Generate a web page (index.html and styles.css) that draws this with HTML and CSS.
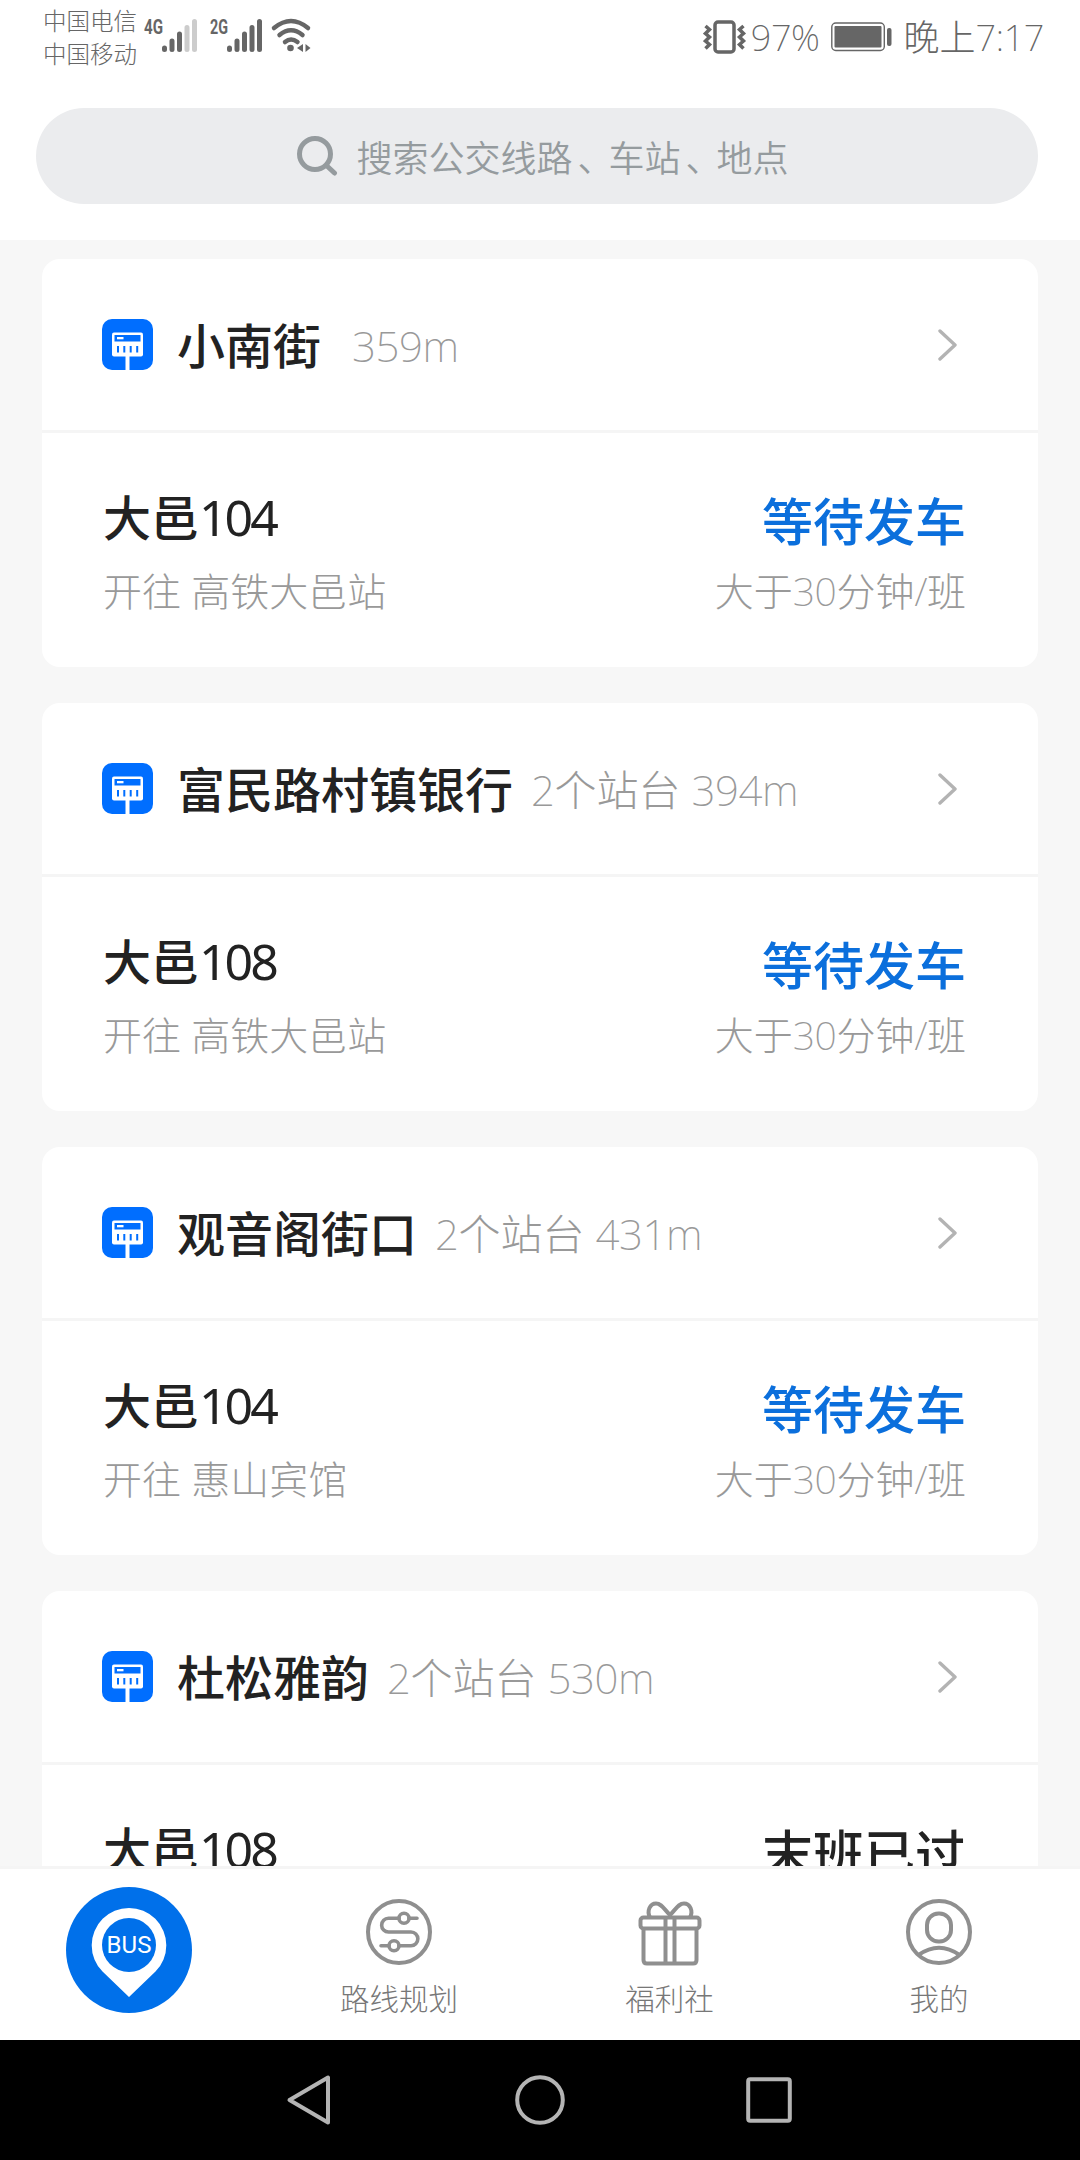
FILE: index.html
```html
<!DOCTYPE html>
<html lang="zh-CN">
<head>
<meta charset="utf-8">
<title>附近站点</title>
<link rel="stylesheet" href="styles.css">
</head>
<body>
<svg class="defs" width="0" height="0" aria-hidden="true">
  <symbol id="stop" viewBox="0 0 51 51">
    <rect width="51" height="51" rx="10" fill="#006eff"/>
    <rect x="10" y="13.500" width="31" height="24" rx="2" fill="#fff"/>
    <rect x="12.500" y="16" width="26" height="6.500" fill="#006eff"/>
    <rect x="15" y="18" width="6.500" height="2.300" fill="#fff"/>
    <path d="M16 27v6.500M22.300 27v6.500M28.700 27v6.500M35.200 27v6.500" stroke="#006eff" stroke-width="2"/>
    <rect x="23.500" y="37" width="4" height="14" fill="#fff"/>
  </symbol>
  <symbol id="arrow" viewBox="0 0 20 32">
    <path d="M2 2l15 14L2 30" fill="none" stroke="#b3b3b3" stroke-width="3.400" stroke-linecap="round" stroke-linejoin="round"/>
  </symbol>
</svg>
<div class="app">
  <header class="status">
    <div class="carriers"><span>中国电信</span><span>中国移动</span></div>
    <svg class="signals" width="170" height="50" viewBox="0 0 170 50">
      <g font-family="Roboto, sans-serif" font-weight="700" font-size="20" fill="#666">
        <text x="1" y="23" textLength="19" lengthAdjust="spacingAndGlyphs">4G</text>
        <text x="67" y="23" textLength="18" lengthAdjust="spacingAndGlyphs">2G</text>
      </g>
      <g stroke="#666" stroke-width="5" stroke-linecap="round">
        <path d="M21.500 37v1.500M29 30v8.500M36.500 23v15.500"/>
        <path d="M44 16.500v22M51.500 10.500v28" stroke="#ccc"/>
        <path d="M86.500 37v1.500M94 30v8.500M101.500 23v15.500M109 16.500v22M116.500 10.500v28"/>
      </g>
      <g fill="none" stroke="#666" stroke-width="4.500" stroke-linecap="round">
        <path d="M131 17Q148 3 165 17M136.500 24Q148 14.500 159.500 24M142 31Q148 26 154.500 31"/>
      </g>
      <circle cx="147.500" cy="37" r="3.300" fill="#666"/>
      <path d="M160 33v8l-6-4zM162.500 33v8l5-4z" fill="#666"/>
    </svg>
    <div class="status-right">
      <svg width="44" height="36" viewBox="0 0 44 36">
        <g fill="none" stroke="#666" stroke-width="3.500">
          <rect x="12" y="3" width="19" height="30" rx="3"/>
          <path d="M2.500 7l4 3.500-4 4 4 3.500-4 4 4 3.500-4 4M40.500 7l-4 3.500 4 4-4 3.500 4 4-4 3.500 4 4" stroke-width="3.500"/>
        </g>
      </svg>
      <span class="percent"><i>97%</i></span>
      <svg class="battery" width="61" height="30" viewBox="0 0 61 30">
        <rect x=".8" y="1" width="52.500" height="27.500" rx="4" fill="none" stroke="#666" stroke-width="1.400"/>
        <rect x="3.500" y="4" width="47" height="21.500" rx="1" fill="#666"/>
        <rect x="56" y="6" width="4.500" height="18" rx="2" fill="#666"/>
      </svg>
      <span class="clock">晚上<i>7:17</i></span>
    </div>
  </header>

  <div class="search-bar">
    <div class="search">
      <svg width="42" height="42" viewBox="0 0 42 42" fill="none" stroke="#959b9e" stroke-width="5" stroke-linecap="round">
        <circle cx="19" cy="19" r="15.500"/><path d="M31 31l7.500 7"/>
      </svg>
      <span>搜索公交线路<em>、</em>车站<em>、</em>地点</span>
    </div>
  </div>

  <main class="list">
    <section class="card">
      <div class="stop"><svg class="stop-icon"><use href="#stop"/></svg><h2>小南街</h2><span class="meta wide"><i>359m</i></span><svg class="arrow"><use href="#arrow"/></svg></div>
      <div class="route">
        <div class="line"><b>大邑<i>104</i></b><p>开往 高铁大邑站</p></div>
        <div class="state"><b>等待发车</b><p>大于<i>30</i>分钟<i>/</i>班</p></div>
      </div>
    </section>
    <section class="card">
      <div class="stop"><svg class="stop-icon"><use href="#stop"/></svg><h2>富民路村镇银行</h2><span class="meta"><i>2</i>个站台 <i>394m</i></span><svg class="arrow"><use href="#arrow"/></svg></div>
      <div class="route">
        <div class="line"><b>大邑<i>108</i></b><p>开往 高铁大邑站</p></div>
        <div class="state"><b>等待发车</b><p>大于<i>30</i>分钟<i>/</i>班</p></div>
      </div>
    </section>
    <section class="card">
      <div class="stop"><svg class="stop-icon"><use href="#stop"/></svg><h2>观音阁街口</h2><span class="meta"><i>2</i>个站台 <i>431m</i></span><svg class="arrow"><use href="#arrow"/></svg></div>
      <div class="route">
        <div class="line"><b>大邑<i>104</i></b><p>开往 惠山宾馆</p></div>
        <div class="state"><b>等待发车</b><p>大于<i>30</i>分钟<i>/</i>班</p></div>
      </div>
    </section>
    <section class="card">
      <div class="stop"><svg class="stop-icon"><use href="#stop"/></svg><h2>杜松雅韵</h2><span class="meta"><i>2</i>个站台 <i>530m</i></span><svg class="arrow"><use href="#arrow"/></svg></div>
      <div class="route">
        <div class="line"><b>大邑<i>108</i></b></div>
        <div class="state ended"><b>末班已过</b></div>
      </div>
    </section>
  </main>

  <nav class="tabs">
    <a class="home">
      <svg width="126" height="126" viewBox="0 0 126 126">
        <circle cx="63" cy="63" r="63" fill="#0070ea"/>
        <path d="M63 110L36.500 84.500A37.300 37.300 0 1 1 89.500 84.500Z" fill="#fff"/>
        <circle cx="63" cy="58" r="27" fill="#0070ea"/>
        <text x="63" y="66" text-anchor="middle" textLength="45" font-family="Roboto, sans-serif" font-size="24" font-weight="400" fill="#fff">BUS</text>
      </svg>
    </a>
    <a class="tab">
      <svg width="68" height="68" viewBox="0 0 68 68" fill="none" stroke="#8f8f8f" stroke-width="4" stroke-linecap="round">
        <circle cx="34" cy="34" r="31"/>
        <g stroke-width="3.600"><path d="M34 20.300H23.500a6.850 6.850 0 0 0 0 13.700H46a6.850 6.850 0 0 1 0 13.700H34M44 20.300H52M24 47.700H16"/>
        <circle cx="39" cy="20.300" r="5"/><circle cx="29" cy="47.700" r="5"/></g>
      </svg>
      <span>路线规划</span>
    </a>
    <a class="tab gift">
      <svg width="68" height="68" viewBox="0 0 68 68" fill="none" stroke="#8f8f8f" stroke-width="4" stroke-linejoin="round">
        <rect x="4.500" y="19.500" width="59" height="11" rx="3"/>
        <path d="M7.500 30.500V62q0 3.500 3.500 3.500H57Q60.500 65.500 60.500 62V30.500M29.500 19.500v46M38.500 19.500v46"/>
        <path d="M14 19.500C10.500 13 14 5.500 20 5.500C25.500 5.500 28 11 34 17C40 11 42.500 5.500 48 5.500C54 5.500 57.500 13 54 19.500"/>
      </svg>
      <span>福利社</span>
    </a>
    <a class="tab">
      <svg width="68" height="68" viewBox="0 0 68 68" fill="none" stroke="#8f8f8f" stroke-width="4">
        <circle cx="34" cy="34" r="31"/>
        <rect x="22" y="15.500" width="24" height="28" rx="11.500"/>
        <path d="M13.500 57Q34 42.500 54.500 57"/>
      </svg>
      <span>我的</span>
    </a>
  </nav>

  <footer class="system">
    <svg width="46" height="52" viewBox="0 0 46 52"><path d="M43 3.500v45L4.500 26z" fill="none" stroke="#b4b4b4" stroke-width="4" stroke-linejoin="round"/></svg>
    <svg class="circle" width="50" height="50" viewBox="0 0 50 50"><circle cx="25" cy="25" r="22.800" fill="none" stroke="#b4b4b4" stroke-width="4"/></svg>
    <svg width="46" height="46" viewBox="0 0 46 46"><rect x="2.200" y="2.200" width="41.600" height="41.600" rx="2" fill="none" stroke="#b4b4b4" stroke-width="4"/></svg>
  </footer>
</div>
</body>
</html>
```
FILE: styles.css
```css
* { box-sizing: border-box; margin: 0; padding: 0; }
body { width: 1080px; height: 2160px; overflow: hidden; font-family: "Noto Sans", "Noto Sans CJK SC", sans-serif; font-weight: 300; background: #f7f7f7; }
svg { display: block; flex: none; }
span, b, h2, p { white-space: nowrap; }
i { font-style: normal; font-weight: 250; letter-spacing: -.01em; }
em { font-style: normal; margin: 0 -5px 0 5px; }
.defs { height: 0; overflow: hidden; float: left; }
.app { display: flex; flex-direction: column; height: 2160px; }

.status { flex: none; height: 80px; display: flex; align-items: flex-start; padding: 0 36px 0 43px; background: #fff; color: #666; }
.carriers { display: flex; flex-direction: column; width: 100px; padding-top: 5px; font-size: 23.5px; line-height: 33px; }
.signals { margin-top: 11px; }
.status-right { margin-left: auto; display: flex; align-items: center; height: 74px; font-size: 36px; line-height: 50px; }
.percent { margin-left: 4px; padding-top: 2px; }
.battery { margin: 0 12px 0 11px; }
.clock { padding-top: 2px; }

.search-bar { flex: none; height: 160px; padding: 28px 42px 0 36px; background: #fff; }
.search { height: 96px; padding-left: 11px; border-radius: 48px; background: #ebecee; color: #959b9e; display: flex; align-items: center; justify-content: center; gap: 18px; font-size: 36px; font-weight: 350; line-height: 50px; }
.search span { padding-top: 5px; }

.list { flex: 1; min-height: 0; overflow: hidden; padding: 19px 42px 0; display: flex; flex-direction: column; gap: 36px; }
.card { flex: none; height: 408px; border-radius: 18px; background: #fff; }
.stop { height: 174px; border-bottom: 3px solid #f5f5f5; display: flex; align-items: center; padding: 0 80px 0 60px; }
.stop-icon { width: 51px; height: 51px; }
.stop h2 { margin-left: 24px; padding-top: 2px; font-size: 48px; line-height: 60px; font-weight: 500; color: #222; }
.meta { margin-left: 18px; padding-top: 2px; font-size: 42px; line-height: 60px; color: #999; }
.meta.wide { margin-left: 31px; }
.arrow { width: 20px; height: 32px; margin-left: auto; }
.route { display: flex; justify-content: space-between; padding: 54px 72px 0 61px; }
.route b { display: block; height: 64px; font-size: 48px; line-height: 64px; font-weight: 500; color: #222; }
.line b { position: relative; top: -1px; }
.line b i { font-size: 50px; line-height: 50px; font-weight: 400; letter-spacing: -.06em; }
.route p { margin-top: 10px; font-size: 39px; line-height: 60px; color: #999; }
.state { text-align: right; }
.state b { font-size: 51px; color: #0b6fdc; position: relative; top: 2px; }
.state.ended b { color: #222; }

.tabs { flex: none; height: 174px; display: grid; grid-template-columns: 258px 282px 258px 282px; border-top: 3px solid #f5f5f5; background: #fff; color: #777; }
.home { padding: 18px 0 0 66px; }
.tab { display: flex; flex-direction: column; align-items: center; padding-top: 29px; font-size: 29.5px; line-height: 44px; gap: 11px; }
.gift { padding-left: 1px; }

.system { flex: none; height: 120px; background: #000; display: flex; align-items: center; justify-content: space-between; padding: 0 288px 0 285px; }
.circle { margin-left: 2px; }
```
